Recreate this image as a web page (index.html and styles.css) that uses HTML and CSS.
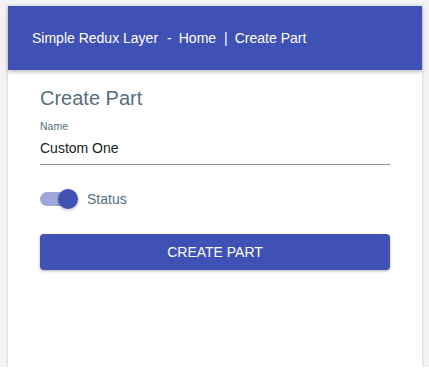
FILE: index.html
```html
<!DOCTYPE html>
<html lang="en">
<head>
    <meta charset="UTF-8">
    <meta name="viewport" content="width=device-width, initial-scale=1.0">
    <title>Simple Redux Layer - Create Part</title>
    <link rel="stylesheet" href="styles.css">
</head>
<body>
    <div class="page">
        <div class="card">
            <header class="app-bar">
                <span class="brand">Simple Redux Layer</span>
                <span class="sep">-</span>
                <a class="nav-link" href="#">Home</a>
                <span class="sep">|</span>
                <a class="nav-link" href="#">Create Part</a>
            </header>

            <main class="content">
                <h2 class="title">Create Part</h2>

                <div class="field">
                    <label class="field-label" for="name">Name</label>
                    <input class="field-input" id="name" type="text" value="Custom One">
                </div>

                <label class="switch-row">
                    <span class="switch">
                        <span class="switch-track"></span>
                        <span class="switch-thumb"></span>
                    </span>
                    <span class="switch-label">Status</span>
                </label>

                <button class="btn" type="button">Create Part</button>
            </main>
        </div>
    </div>
</body>
</html>
```

FILE: styles.css
```css
html {
    background-color: #ffffff;
}

body {
    margin: 0;
    padding: 0;
    font-family: 'Liberation Sans', Arial, sans-serif;
}

.page {
    height: 367px;
    box-sizing: border-box;
    padding: 6px 7px 0 8px;
    background-color: #f3f3f3;
}

.card {
    height: 100%;
    background-color: #ffffff;
    box-shadow: 0 0 3px rgba(0, 0, 0, 0.18);
}

.app-bar {
    display: flex;
    align-items: center;
    height: 64px;
    padding-left: 24px;
    background-color: #3f51b5;
    color: #ffffff;
    font-size: 14px;
    box-shadow: 0 2px 4px rgba(0, 0, 0, 0.25);
    position: relative;
}

.brand {
    margin-right: 9px;
}

.sep {
    margin-right: 7px;
}

.nav-link {
    color: #ffffff;
    text-decoration: none;
    margin-right: 8px;
}

.content {
    padding: 14px 32px 0;
}

.title {
    margin: 0;
    font-size: 20px;
    font-weight: normal;
    line-height: 28px;
    color: #546e7a;
}

.field {
    display: flex;
    flex-direction: column;
    margin-top: 8px;
}

.field-label {
    font-size: 10.5px;
    line-height: 13px;
    color: #546e7a;
}

.field-input {
    margin-top: 2px;
    padding: 4px 0 7px;
    border: none;
    border-bottom: 1px solid #949494;
    font-family: 'Liberation Sans', Arial, sans-serif;
    font-size: 14px;
    line-height: 18px;
    color: #212121;
    outline: none;
}

.switch-row {
    display: flex;
    align-items: center;
    margin-top: 23px;
    height: 22px;
}

.switch {
    position: relative;
    width: 38px;
    height: 20px;
    margin-right: 9px;
}

.switch-track {
    position: absolute;
    left: 0;
    top: 3px;
    width: 34px;
    height: 14px;
    border-radius: 7px;
    background-color: #9fa8da;
}

.switch-thumb {
    position: absolute;
    left: 18px;
    top: 0;
    width: 20px;
    height: 20px;
    border-radius: 50%;
    background-color: #3f51b5;
    box-shadow: 0 1px 3px rgba(0, 0, 0, 0.3);
}

.switch-label {
    font-size: 14px;
    color: #546e7a;
}

.btn {
    display: block;
    width: 100%;
    height: 36px;
    margin-top: 24px;
    border: none;
    border-radius: 4px;
    background-color: #3f51b5;
    color: #ffffff;
    font-family: 'Liberation Sans', Arial, sans-serif;
    font-size: 14px;
    text-transform: uppercase;
    box-shadow: 0 1px 3px rgba(0, 0, 0, 0.3);
    cursor: pointer;
}
```
